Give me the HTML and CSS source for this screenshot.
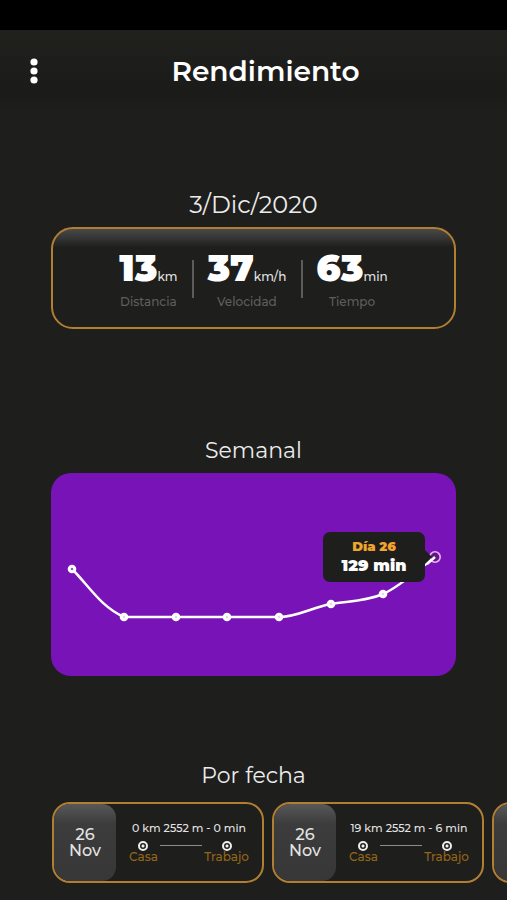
FILE: index.html
```html
<!DOCTYPE html>
<html lang="es">
<head>
  <meta charset="UTF-8" />
  <meta name="viewport" content="width=device-width, initial-scale=1.0"/>
  <title>Rendimiento</title>
  <link rel="stylesheet" href="styles.css">
</head>
<body>

<div class="status-bar"></div>

<header class="header">
  <button class="menu-btn" aria-label="Menú">
    <svg width="8" height="26" viewBox="0 0 8 26" fill="#fff">
      <circle cx="4" cy="4" r="3.6"/>
      <circle cx="4" cy="13" r="3.6"/>
      <circle cx="4" cy="22" r="3.6"/>
    </svg>
  </button>
  <h1>Rendimiento</h1>
</header>

<main>
  <section class="day">
    <h2>3/Dic/2020</h2>
    <div class="summary">
      <div class="stat">
        <p class="value"><strong>13</strong>km</p>
        <p class="label">Distancia</p>
      </div>
      <div class="stat">
        <p class="value"><strong>37</strong>km/h</p>
        <p class="label">Velocidad</p>
      </div>
      <div class="stat">
        <p class="value"><strong>63</strong>min</p>
        <p class="label">Tiempo</p>
      </div>
    </div>
  </section>

  <section class="week">
    <h2>Semanal</h2>
    <div class="chart">
      <svg viewBox="0 0 405 203">
        <path d="M21 96 C38 113 50 134 73 144 H228 C246 144 262 134 280 131 C300 128 316 128 332 121 C348 114 366 98 384 84" fill="none" stroke="#fff" stroke-width="2.5"/>
        <g fill="#e8d4f5" stroke="#fff" stroke-width="3">
          <circle cx="21" cy="96" r="2.8" fill="#9a55c8"/>
          <circle cx="73" cy="144" r="2.8"/>
          <circle cx="125" cy="144" r="2.8"/>
          <circle cx="176" cy="144" r="2.8"/>
          <circle cx="228" cy="144" r="2.8"/>
          <circle cx="280" cy="131" r="2.8"/>
          <circle cx="332" cy="121" r="2.8"/>
        </g>
        <circle cx="384" cy="84" r="5.2" fill="#5d1a83" stroke="#eeb4f5" stroke-width="1.6"/>
        <path d="M376 91 L384 84" stroke="#fff" stroke-width="2.5"/>
      </svg>
      <div class="tooltip">
        <span class="tooltip-day">Día 26</span>
        <span class="tooltip-value">129 min</span>
      </div>
    </div>
  </section>

  <section class="by-date">
    <h2>Por fecha</h2>
    <div class="trips">
      <article class="trip">
        <div class="trip-date"><span>26</span><span>Nov</span></div>
        <div class="trip-info">
          <p>0 km 2552 m - 0 min</p>
          <div class="route">
            <div class="stop"><i class="dot"></i>Casa</div>
            <div class="line"></div>
            <div class="stop"><i class="dot"></i>Trabajo</div>
          </div>
        </div>
      </article>
      <article class="trip">
        <div class="trip-date"><span>26</span><span>Nov</span></div>
        <div class="trip-info">
          <p>19 km 2552 m - 6 min</p>
          <div class="route">
            <div class="stop"><i class="dot"></i>Casa</div>
            <div class="line"></div>
            <div class="stop"><i class="dot"></i>Trabajo</div>
          </div>
        </div>
      </article>
      <article class="trip">
        <div class="trip-date"></div>
      </article>
    </div>
  </section>
</main>

</body>
</html>
```
FILE: styles.css
```css
* { margin: 0; padding: 0; box-sizing: border-box; }
body {
  background: #1e1e1c; color: #fff;
  font-family: 'Montserrat', 'Inter', sans-serif;
  overflow-x: hidden;
}
.status-bar { height: 30px; background: #000; }
.header {
  display: grid; grid-template-columns: 68px 1fr 44px;
  align-items: center; height: 82px;
  background: linear-gradient(#20201d, #1b1b1a 75%, #1e1e1c);
}
.header h1 { font-size: 28px; line-height: 36px; font-weight: 600; text-align: center; }
.menu-btn {
  display: flex; justify-content: center; padding: 8px;
  background: none; border: none; cursor: pointer;
}
main { padding: 79px 0 16px 51px; }
h2 {
  margin: 0 51px 8px 0; font-size: 22px; line-height: 28px;
  font-weight: 400; text-align: center; color: #ececec;
}
.day { margin-bottom: 108px; }
.day h2 { font-size: 24px; }
.week { margin-bottom: 86px; }
.by-date h2 { margin-bottom: 12px; }
.summary {
  display: flex; justify-content: center;
  margin-right: 51px; padding: 19px 0 11px;
  border: 2px solid #b27f32; border-radius: 22px;
  background: linear-gradient(#484848, #383838 8px, #1e1e1c 18px);
}
.stat { position: relative; padding: 0 15px; text-align: center; }
.stat + .stat::before {
  content: ""; position: absolute; left: 0; top: 12px;
  width: 2px; height: 38px; background: #5c5c5b;
}
.value {
  display: flex; justify-content: center; align-items: baseline;
  font-size: 12px; line-height: 16px; font-weight: 500; color: #e4e4e4;
}
.value strong { font-size: 37px; line-height: 40px; font-weight: 900; color: #fff; }
.label { font-size: 12px; line-height: 28px; font-weight: 500; color: #5e5e5d; }
.chart {
  position: relative; margin-right: 51px;
  background: #7813b8; border-radius: 20px;
}
.chart svg { display: block; width: 100%; }
.tooltip {
  position: absolute; top: 29%; right: 31px;
  display: flex; flex-direction: column; align-items: center;
  width: 102px; padding: 4px 0 6px;
  background: #1e1e1c; border-radius: 7px;
}
.tooltip::after {
  content: ""; position: absolute; left: 100%; top: 18px;
  border: 7px solid transparent; border-left-color: #1e1e1c; border-right: none;
}
.tooltip-day { font-size: 13px; line-height: 20px; font-weight: 900; color: #efa52e; }
.tooltip-value { font-size: 16px; line-height: 20px; font-weight: 900; }
.trips { display: flex; gap: 8px; overflow: hidden; padding-left: 1px; }
.trip {
  display: flex; flex: 0 0 212px; height: 81px; overflow: hidden;
  border: 2px solid #b27f32; border-radius: 18px;
}
.trip-date {
  display: flex; flex-direction: column; align-items: center; justify-content: center;
  flex: 0 0 62px; border-radius: 0 14px 14px 0;
  background: linear-gradient(#585858, #3c3c3c 20px, #373737);
  font-size: 16px; line-height: 16px; font-weight: 500; color: #e4e4e4;
}
.trip-info { flex: 1; padding: 16px 13px 0; text-align: center; color: #e4e4e4; }
.trip-info p { font-size: 11px; line-height: 16px; font-weight: 500; white-space: nowrap; }
.route { display: flex; justify-content: space-between; padding-top: 5px; }
.stop {
  display: flex; flex-direction: column; align-items: center;
  font-size: 12px; line-height: 12px; font-weight: 500; color: #956616;
}
.dot {
  width: 10px; height: 10px; border: 2px solid #eee; border-radius: 50%;
  background: radial-gradient(#eee 1px, #1e1e1c 2px);
}
.line { width: 42px; height: 1px; margin-top: 4px; background: #8c8c8b; }
```
